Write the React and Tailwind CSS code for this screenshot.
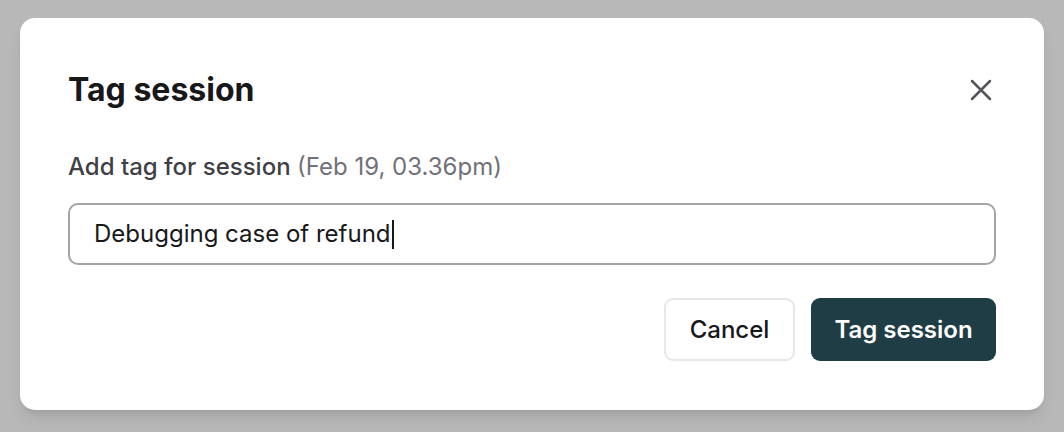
import React from "react";

export default function App() {
  return (
    <div
      className="w-[1064px] h-[432px] bg-[#b8b8b8] pt-[18px] px-5 overflow-hidden"
      style={{ fontFamily: "Inter, 'Noto Sans', sans-serif" }}
    >
      {/* MODAL */}
      <div className="w-[1024px] h-[392px] bg-white rounded-[15px] p-12 shadow-lg">
        {/* HEADER */}
        <div className="h-12 flex items-center justify-between">
          <h2 className="text-[32px] leading-10 font-bold text-[#18181b]">
            Tag session
          </h2>
          <button className="w-8 h-8 -mr-[1px] flex items-center justify-center text-[#55555c]">
            <svg width="22" height="22" viewBox="0 0 22 22" fill="none">
              <path
                d="M2 2L20 20M20 2L2 20"
                stroke="currentColor"
                strokeWidth="2.5"
                strokeLinecap="round"
              />
            </svg>
          </button>
        </div>

        {/* BODY */}
        <div className="mt-[38px] text-[24px] leading-[30px] font-medium text-[#3f3f46]">
          Add tag for session{" "}
          <span className="font-normal text-[#71717a]">(Feb 19, 03.36pm)</span>
        </div>

        <div className="mt-[21px] h-[62px] border-2 border-[#a3a3a8] rounded-[10px] flex items-center px-6 text-[24px] text-[#18181b]">
          <span>Debugging case of refund</span>
          <span className="w-[2px] h-[29px] bg-[#18181b] ml-[1px]" />
        </div>

        {/* FOOTER */}
        <div className="mt-[33px] flex justify-end gap-4">
          <button className="w-[131px] h-[63px] rounded-[9px] border-2 border-[#e7e7e9] bg-white text-[24px] font-medium text-[#18181b]">
            Cancel
          </button>
          <button className="w-[185px] h-[63px] rounded-[9px] bg-[#1f3d45] text-[24px] font-semibold text-white">
            Tag session
          </button>
        </div>
      </div>
    </div>
  );
}
